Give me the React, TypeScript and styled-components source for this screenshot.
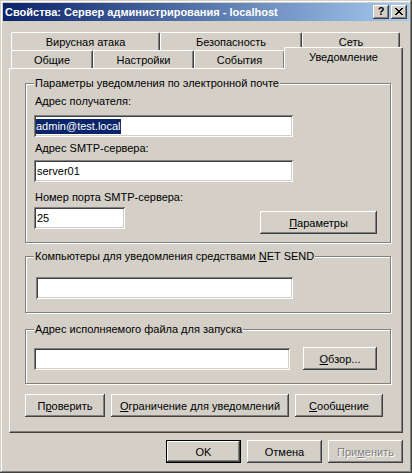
import React from "react";
import styled, { createGlobalStyle } from "styled-components";

const GlobalStyle = createGlobalStyle`
  html, body {
    margin: 0;
    padding: 0;
    background: #d4d0c8;
  }
  * {
    box-sizing: border-box;
  }
`;

const raised = `
  box-shadow: inset -1px -1px #404040, inset 1px 1px #fff,
    inset -2px -2px #808080, inset 2px 2px #d4d0c8;
`;

const Window = styled.div`
  width: 412px;
  height: 473px;
  padding: 3px;
  background: #d4d0c8;
  box-shadow: inset -1px -1px #404040, inset 1px 1px #d4d0c8,
    inset -2px -2px #808080, inset 2px 2px #fff;
  display: flex;
  flex-direction: column;
  font-family: "Liberation Sans", Arial, sans-serif;
  font-size: 11px;
  color: #000;
`;

const TitleBar = styled.div`
  height: 18px;
  display: flex;
  align-items: center;
  padding: 0 2px 0 2px;
  background: linear-gradient(to right, #0a246a, #a6caf0);
`;

const Caption = styled.div`
  flex: 1;
  color: #fff;
  font-weight: bold;
  white-space: nowrap;
`;

const CaptionButton = styled.div`
  width: 16px;
  height: 14px;
  margin-left: 2px;
  background: #d4d0c8;
  ${raised}
  display: flex;
  align-items: center;
  justify-content: center;
  font-weight: bold;
  font-size: 11px;
  line-height: 1;
  padding-bottom: 1px;
`;

const Body = styled.div`
  padding: 0 6px;
  display: flex;
  flex-direction: column;
`;

const TabRow = styled.div<{ $top?: number }>`
  display: flex;
  height: 18px;
  padding-left: 2px;
  margin-top: ${(p) => p.$top ?? 0}px;
`;

const Tab = styled.div<{ $w: number; $active?: boolean }>`
  width: ${(p) => p.$w}px;
  height: ${(p) => (p.$active ? 22 : 18)}px;
  margin-top: ${(p) => (p.$active ? -3 : 0)}px;
  margin-left: ${(p) => (p.$active ? -1 : 0)}px;
  padding-bottom: ${(p) => (p.$active ? 3 : 0)}px;
  position: ${(p) => (p.$active ? "relative" : "static")};
  z-index: ${(p) => (p.$active ? 2 : "auto")};
  background: #d4d0c8;
  border-top: 1px solid #fff;
  border-left: 1px solid #fff;
  border-right: 1px solid #404040;
  border-radius: 2px 2px 0 0;
  box-shadow: inset -1px 0 #808080;
  display: flex;
  align-items: center;
  justify-content: center;
  white-space: nowrap;
`;

const Panel = styled.div`
  height: 365px;
  border-top: 1px solid #fff;
  border-left: 1px solid #fff;
  border-right: 1px solid #404040;
  border-bottom: 1px solid #404040;
  box-shadow: inset -1px -1px #808080;
  padding: 14px 11px 0 15px;
  display: flex;
  flex-direction: column;
`;

const Group = styled.div<{ $top?: number; $bottom: number }>`
  margin-top: ${(p) => p.$top ?? 0}px;
  border: 1px solid #808080;
  box-shadow: inset 1px 1px #fff, 1px 1px #fff;
  padding: 0 13px ${(p) => p.$bottom}px 8px;
  display: flex;
  flex-direction: column;
`;

const Legend = styled.div`
  align-self: flex-start;
  margin-top: -7px;
  padding: 0 1px;
  line-height: 13px;
  background: #d4d0c8;
  white-space: nowrap;
`;

const Label = styled.div<{ $top: number }>`
  margin-top: ${(p) => p.$top}px;
  line-height: 13px;
  padding-left: 1px;
`;

const TextBox = styled.div<{ $w: number; $top?: number; $left?: number }>`
  width: ${(p) => p.$w}px;
  height: 22px;
  margin-top: ${(p) => p.$top ?? 0}px;
  margin-left: ${(p) => p.$left ?? 0}px;
  background: #fff;
  box-shadow: inset 1px 1px #808080, inset -1px -1px #fff,
    inset 2px 2px #404040, inset -2px -2px #d4d0c8;
  padding: 0 3px;
  display: flex;
  align-items: center;
  white-space: nowrap;
  flex-shrink: 0;
`;

const Selected = styled.span`
  background: #0a246a;
  color: #fff;
  padding: 1px 0 2px;
  margin-left: -1px;
`;

const FieldRow = styled.div<{ $top: number }>`
  display: flex;
  align-items: flex-start;
  margin-top: ${(p) => p.$top}px;
`;

const Button = styled.div<{ $w: number; $top?: number; $default?: boolean; $disabled?: boolean }>`
  width: ${(p) => p.$w}px;
  height: 23px;
  margin-top: ${(p) => p.$top ?? 0}px;
  flex-shrink: 0;
  background: #d4d0c8;
  ${(p) =>
    p.$default
      ? `border: 1px solid #000;
  box-shadow: inset -1px -1px #404040, inset 1px 1px #fff, inset -2px -2px #808080;`
      : raised}
  display: flex;
  align-items: center;
  justify-content: center;
  white-space: nowrap;
  color: ${(p) => (p.$disabled ? "#808080" : "#000")};
  text-shadow: ${(p) => (p.$disabled ? "1px 1px #fff" : "none")};
`;

const PushRight = styled.div`
  margin-left: auto;
`;

const ActionRow = styled.div`
  display: flex;
  gap: 6px;
  margin-top: 10px;
`;

const Footer = styled.div`
  display: flex;
  justify-content: flex-end;
  gap: 6px;
  margin-top: 7px;
`;

const CloseGlyph = () => (
  <svg width="8" height="7" viewBox="0 0 8 7" shapeRendering="crispEdges">
    <path
      d="M0 0h2v1h1v1h2V1h1V0h2v1H7v1H6v1H5v1h1v1h1v1h1v1H6V6H5V5H3v1H2v1H0V6h1V5h1V4h1V3H2V2H1V1H0z"
      fill="#000"
    />
  </svg>
);

export default function App() {
  return (
    <>
      <GlobalStyle />
      <Window>
        <TitleBar>
          <Caption>Свойства: Сервер администрирования - localhost</Caption>
          <CaptionButton>?</CaptionButton>
          <CaptionButton>
            <CloseGlyph />
          </CaptionButton>
        </TitleBar>
        <Body>
          <TabRow $top={11}>
            <Tab $w={149}>Вирусная атака</Tab>
            <Tab $w={142}>Безопасность</Tab>
            <Tab $w={98}>Сеть</Tab>
          </TabRow>
          <TabRow>
            <Tab $w={82}>Общие</Tab>
            <Tab $w={101}>Настройки</Tab>
            <Tab $w={91}>События</Tab>
            <Tab $w={119} $active>
              Уведомление
            </Tab>
          </TabRow>
          <Panel>
            <Group $bottom={8}>
              <Legend>Параметры уведомления по электронной почте</Legend>
              <Label $top={5}>Адрес получателя:</Label>
              <TextBox $w={259} $top={7}>
                <Selected>admin@test.local</Selected>
              </TextBox>
              <Label $top={5}>Адрес SMTP-сервера:</Label>
              <TextBox $w={259} $top={5}>
                server01
              </TextBox>
              <Label $top={9}>Номер порта SMTP-сервера:</Label>
              <FieldRow $top={3}>
                <TextBox $w={91}>25</TextBox>
                <PushRight>
                  <Button $w={117} $top={4}>
                    <span>
                      <u>П</u>араметры
                    </span>
                  </Button>
                </PushRight>
              </FieldRow>
            </Group>
            <Group $top={13} $bottom={13}>
              <Legend>
                Компьютеры для уведомления средствами <u>N</u>ET SEND
              </Legend>
              <TextBox $w={257} $top={14} $left={2} />
            </Group>
            <Group $top={16} $bottom={13}>
              <Legend>Адрес исполняемого файла для запуска</Legend>
              <FieldRow $top={11}>
                <TextBox $w={256} $top={1} />
                <PushRight>
                  <Button $w={74}>
                    <span>
                      <u>О</u>бзор...
                    </span>
                  </Button>
                </PushRight>
              </FieldRow>
            </Group>
            <ActionRow>
              <Button $w={80}>
                <span>
                  П<u>р</u>оверить
                </span>
              </Button>
              <Button $w={178}>
                <span>
                  <u>О</u>граничение для уведомлений
                </span>
              </Button>
              <Button $w={88}>
                <span>
                  <u>С</u>ообщение
                </span>
              </Button>
            </ActionRow>
          </Panel>
          <Footer>
            <Button $w={75} $default>
              OK
            </Button>
            <Button $w={75}>Отмена</Button>
            <Button $w={75} $disabled>
              <span>
                При<u>м</u>енить
              </span>
            </Button>
          </Footer>
        </Body>
      </Window>
    </>
  );
}
